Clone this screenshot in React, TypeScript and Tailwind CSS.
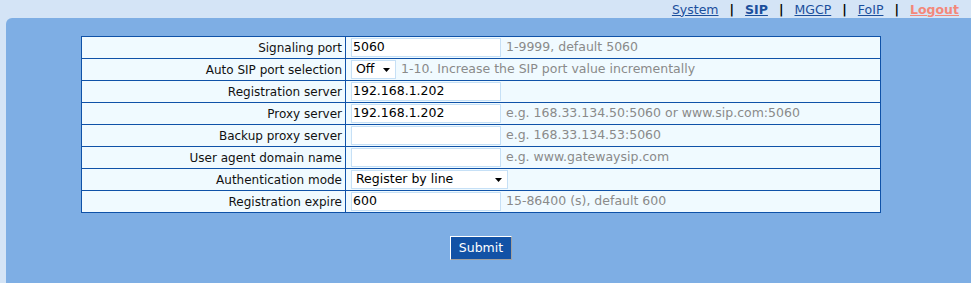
import React from 'react';

type Row = {
  label: string;
  kind: 'input' | 'select';
  value: string;
  hint?: string;
  selectWidth?: string;
};

const ROWS: Row[] = [
  { label: 'Signaling port', kind: 'input', value: '5060', hint: '1-9999, default 5060' },
  { label: 'Auto SIP port selection', kind: 'select', value: 'Off', hint: '1-10. Increase the SIP port value incrementally', selectWidth: 'w-[45px]' },
  { label: 'Registration server', kind: 'input', value: '192.168.1.202' },
  { label: 'Proxy server', kind: 'input', value: '192.168.1.202', hint: 'e.g. 168.33.134.50:5060 or www.sip.com:5060' },
  { label: 'Backup proxy server', kind: 'input', value: '', hint: 'e.g. 168.33.134.53:5060' },
  { label: 'User agent domain name', kind: 'input', value: '', hint: 'e.g. www.gatewaysip.com' },
  { label: 'Authentication mode', kind: 'select', value: 'Register by line', selectWidth: 'w-[157px]' },
  { label: 'Registration expire', kind: 'input', value: '600', hint: '15-86400 (s), default 600' },
];

const NAV = [
  { name: 'System' },
  { name: 'SIP', bold: true },
  { name: 'MGCP' },
  { name: 'FoIP' },
];

const FakeSelect: React.FC<{ value: string; width: string }> = ({ value, width }) => (
  <div className={`${width} h-[19px] bg-white border border-[#c6e0f6] flex items-center justify-between pl-[4px] pr-[5px] text-black text-[12.5px]`}>
    <span>{value}</span>
    <svg width="7" height="4" viewBox="0 0 7 4">
      <path d="M0 0h7L3.5 4z" fill="#000" />
    </svg>
  </div>
);

export default function App() {
  return (
    <div className="w-[971px] h-[283px] bg-[#d4e4f6] overflow-hidden flex flex-col text-[12px] font-['DejaVu_Sans',Verdana,sans-serif]">
      <div className="h-[18px] flex items-center justify-end pr-[12px] gap-[11px] text-[12.5px] pt-[2px]">
        {NAV.map((n) => (
          <React.Fragment key={n.name}>
            <a className={`underline text-[#1b4f9c] ${n.bold ? 'font-bold' : ''}`}>{n.name}</a>
            <span className="text-black font-bold">|</span>
          </React.Fragment>
        ))}
        <a className="underline text-[#f3887a] font-bold">Logout</a>
      </div>

      <div className="flex-1 ml-[6px] bg-[#7eaee4] rounded-tl-[6px] pt-[18px] pl-[75px]">
        <table className="w-[800px] border-collapse border border-[#0f52a8] bg-[#f0faff]">
          <tbody>
            {ROWS.map((r) => (
              <tr key={r.label} className="h-[22px]">
                <td className="w-[264px] border border-[#0f52a8] text-right pr-[3px] text-[#111] p-0 leading-none">
                  {r.label}
                </td>
                <td className="border border-[#0f52a8] pl-[5px] p-0">
                  <div className="flex items-center gap-[5px] text-[12.5px]">
                    {r.kind === 'input' ? (
                      <div className="w-[150px] h-[19px] bg-white border border-[#c6e0f6] pl-[1px] flex items-center text-black">
                        {r.value}
                      </div>
                    ) : (
                      <FakeSelect value={r.value} width={r.selectWidth!} />
                    )}
                    {r.hint && <span className="text-[#8a8a8a]">{r.hint}</span>}
                  </div>
                </td>
              </tr>
            ))}
          </tbody>
        </table>

        <div className="w-[800px] flex justify-center pt-[23px]">
          <button className="w-[62px] h-[24px] bg-[#1252a6] text-white border border-t-white border-l-white border-r-[#a0a0a0] border-b-[#a0a0a0] text-[12.5px]">
            Submit
          </button>
        </div>
      </div>
    </div>
  );
}
